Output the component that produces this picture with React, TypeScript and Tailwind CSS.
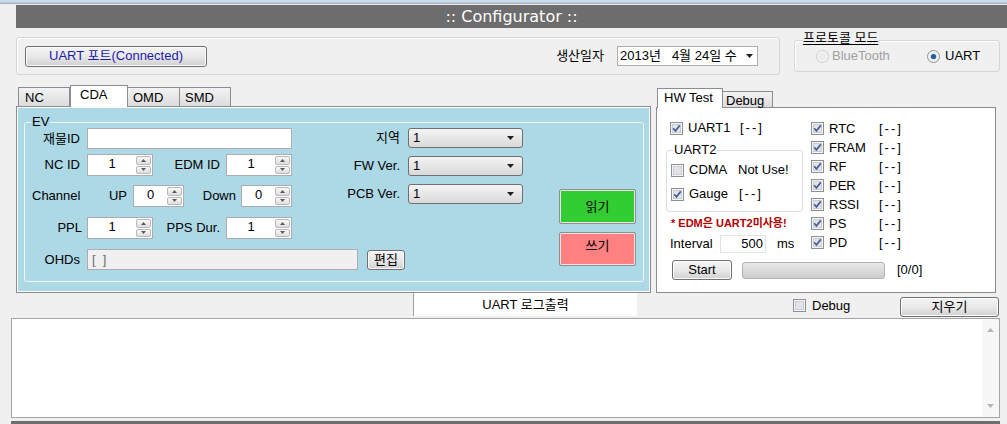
import React from "react";

const btn =
  "rounded-[3px] border border-[#707070] bg-linear-to-b from-[#f4f4f4] via-[#e9e9e9] to-[#d0d0d0] shadow-[inset_0_0_0_1px_#fcfcfc]";

function Check({ on }: { on: boolean }) {
  return (
    <svg width="13" height="13" viewBox="0 0 13 13" className="shrink-0">
      <rect x="0.5" y="0.5" width="12" height="12" fill="#f6f6f6" stroke="#8e8f8f" />
      <rect x="2.5" y="2.5" width="8" height="8" fill="#e1e4ea" stroke="#c9ccd2" />
      {on && <path d="M3.2 6.3 L5.4 8.9 L9.8 3.4" stroke="#4a5f97" strokeWidth="1.7" fill="none" />}
    </svg>
  );
}

function Radio({ on, disabled }: { on: boolean; disabled?: boolean }) {
  return (
    <svg width="13" height="13" viewBox="0 0 13 13" className="shrink-0">
      <circle cx="6.5" cy="6.5" r="6" fill={disabled ? "#f4f4f4" : "#f6f6f6"} stroke={disabled ? "#cdcdcd" : "#8e8f8f"} />
      <circle cx="6.5" cy="6.5" r="4" fill={disabled ? "#ececec" : "#e1e4ea"} />
      {on && <circle cx="6.5" cy="6.5" r="2.6" fill="#1f5f9e" />}
    </svg>
  );
}

function Caret() {
  return (
    <svg width="7" height="4" viewBox="0 0 7 4" className="shrink-0">
      <path d="M0 0 L7 0 L3.5 4 Z" fill="#222" />
    </svg>
  );
}

function Spin({ className, value }: { className: string; value: string }) {
  return (
    <div className={`flex h-[22px] border border-[#abadb3] bg-white ${className}`}>
      <div className="flex-1 text-center leading-[17px]">{value}</div>
      <div className="flex w-[16px] flex-col gap-px py-px pr-px">
        <div className="flex flex-1 items-center justify-center rounded-[2px] border border-[#b8b8b8] bg-linear-to-b from-[#f8f8f8] to-[#dedede]">
          <svg width="5" height="3" viewBox="0 0 5 3">
            <path d="M0 3 L2.5 0 L5 3 Z" fill="#5a5a5a" />
          </svg>
        </div>
        <div className="flex flex-1 items-center justify-center rounded-[2px] border border-[#b8b8b8] bg-linear-to-b from-[#f8f8f8] to-[#dedede]">
          <svg width="5" height="3" viewBox="0 0 5 3">
            <path d="M0 0 L5 0 L2.5 3 Z" fill="#5a5a5a" />
          </svg>
        </div>
      </div>
    </div>
  );
}

function Select() {
  return (
    <div className="flex h-[20px] w-[115px] items-center justify-between rounded-[3px] border border-[#707070] bg-linear-to-b from-[#f4f4f4] to-[#d9d9d9] pr-[8px] pl-[4px]">
      <span>1</span>
      <Caret />
    </div>
  );
}

function Dash() {
  return <span className="tracking-[2px]">[--]</span>;
}

function HwRow({ label, on }: { label: string; on: boolean }) {
  return (
    <div className="flex h-[19px] items-center">
      <Check on={on} />
      <span className="ml-[5px] w-[50px]">{label}</span>
      <Dash />
    </div>
  );
}

export default function App() {
  return (
    <div className="h-[424px] w-[1007px] overflow-hidden bg-[#f0f0f0] font-['Liberation_Sans','Noto_Sans_CJK_KR',sans-serif] text-[13px] text-black">
      {/* window frame edge */}
      <div className="h-[4px] border-b border-[#9fb1c6] bg-linear-to-b from-[#d3dfec] to-[#b9cbe0]" />

      {/* title bar */}
      <div className="mt-[1px] ml-[16px] flex h-[23px] items-center justify-center bg-[#6d6d6d] font-['DejaVu_Sans',sans-serif] text-[16px] text-white">
        :: Configurator ::
      </div>

      {/* port / date / protocol */}
      <div className="flex h-[57px]">
        <div className="mt-[9px] ml-[16px] flex h-[38px] w-[764px] items-center rounded-[3px] border border-[#d6d6d6] pr-[21px] pl-[8px] shadow-[inset_1px_1px_0_#fff]">
          <div className={`flex h-[21px] w-[182px] items-center justify-center text-[#1c1ca8] ${btn}`}>
            UART 포트(Connected)
          </div>
          <span className="ml-auto">생산일자</span>
          <div className="ml-[13px] flex h-[20px] w-[141px] items-center border border-[#abadb3] bg-white pr-[4px] pl-[2px]">
            <span>2013년</span>
            <span className="ml-[11px]">4월 24일 수</span>
            <span className="ml-auto">
              <Caret />
            </span>
          </div>
        </div>
        <div className="relative mt-[12px] ml-[14px] flex h-[32px] w-[206px] items-center rounded-[3px] border border-[#d6d6d6] pl-[21px] shadow-[inset_1px_1px_0_#fff]">
          <span className="absolute -top-[10px] left-[8px] bg-[#f0f0f0] leading-[14px] underline underline-offset-2">
            프로토콜 모드
          </span>
          <Radio on={false} disabled />
          <span className="ml-[3px] w-[95px] text-[#a0a0a0]">BlueTooth</span>
          <Radio on />
          <span className="ml-[5px]">UART</span>
        </div>
      </div>

      {/* tab controls */}
      <div className="flex h-[208px]">
        {/* left tab control */}
        <div className="ml-[16px] w-[635px]">
          <div className="flex h-[21px] items-end pl-[2px]">
            <div className="h-[19px] w-[52px] border border-b-0 border-[#898c95] bg-linear-to-b from-[#f3f3f3] to-[#dcdcdc] pl-[6px] leading-[19px]">
              NC
            </div>
            <div className="relative z-10 -mb-px h-[22px] w-[58px] border border-b-0 border-[#898c95] bg-white pl-[9px] leading-[18px]">
              CDA
            </div>
            <div className="h-[19px] w-[52px] border border-b-0 border-l-0 border-[#898c95] bg-linear-to-b from-[#f3f3f3] to-[#dcdcdc] pl-[5px] leading-[19px]">
              OMD
            </div>
            <div className="h-[19px] w-[51px] border border-b-0 border-l-0 border-[#898c95] bg-linear-to-b from-[#f3f3f3] to-[#dcdcdc] pl-[5px] leading-[19px]">
              SMD
            </div>
          </div>
          <div className="h-[187px] border border-[#898c95] bg-white p-[1px]">
            <div className="h-full bg-[#add8e6] pt-[14px] pr-[5px] pl-[6px]">
              <div className="relative flex h-[160px] rounded-[3px] border border-[#eef7fa] pl-px">
                <span className="absolute -top-[9px] left-[6px] bg-[#add8e6] px-px leading-[15px]">EV</span>

                <div className="flex flex-col pt-[5px]">
                  <div className="flex items-start">
                    {/* fields rows 1-4 */}
                    <div className="flex w-[266px] flex-col">
                      <div className="flex h-[21px] items-center">
                        <span className="w-[54px] text-right">재물ID</span>
                        <div className="ml-[7px] h-[21px] w-[205px] border border-[#abadb3] bg-white" />
                      </div>
                      <div className="mt-[5px] flex h-[22px] items-center">
                        <span className="w-[54px] text-right">NC ID</span>
                        <Spin className="ml-[7px] w-[66px]" value="1" />
                        <span className="w-[67px] text-right">EDM ID</span>
                        <Spin className="ml-[6px] w-[66px]" value="1" />
                      </div>
                      <div className="mt-[9px] flex h-[22px] items-center">
                        <span className="w-[61px] pl-[6px]">Channel</span>
                        <span className="w-[46px] pr-[6px] text-right">UP</span>
                        <Spin className="w-[51px]" value="0" />
                        <span className="w-[57px] pr-[5px] text-right">Down</span>
                        <Spin className="w-[51px]" value="0" />
                      </div>
                      <div className="mt-[10px] flex h-[22px] items-center">
                        <span className="w-[56px] text-right">PPL</span>
                        <Spin className="ml-[5px] w-[66px]" value="1" />
                        <span className="w-[67px] text-right">PPS Dur.</span>
                        <Spin className="ml-[6px] w-[66px]" value="1" />
                      </div>
                    </div>
                    {/* selects */}
                    <div className="flex flex-col gap-[8px]">
                      <div className="flex items-center">
                        <span className="w-[108px] text-right">지역</span>
                        <div className="ml-[8px]">
                          <Select />
                        </div>
                      </div>
                      <div className="flex items-center">
                        <span className="w-[108px] text-right">FW Ver.</span>
                        <div className="ml-[8px]">
                          <Select />
                        </div>
                      </div>
                      <div className="flex items-center">
                        <span className="w-[108px] text-right">PCB Ver.</span>
                        <div className="ml-[8px]">
                          <Select />
                        </div>
                      </div>
                    </div>
                  </div>
                  <div className="mt-[10px] flex h-[21px] items-center">
                    <span className="w-[54px] text-right">OHDs</span>
                    <div className="ml-[7px] flex h-[21px] w-[271px] items-center border border-[#abadb3] bg-[#f0f0f0] pl-[4px] text-[#6d6d6d]">
                      [&nbsp;&nbsp;]
                    </div>
                    <div className={`ml-[9px] flex h-[20px] w-[38px] items-center justify-center ${btn}`}>편집</div>
                  </div>
                </div>

                <div className="mt-[66px] ml-[36px] flex flex-col gap-[8px]">
                  <div className="flex h-[35px] w-[77px] items-center justify-center rounded-[2px] border border-[#8f8f8f] bg-[#33cc33] shadow-[inset_0_0_0_1px_#e6e6e6]">
                    읽기
                  </div>
                  <div className="flex h-[34px] w-[77px] items-center justify-center rounded-[2px] border border-[#8f8f8f] bg-[#ff8080] pb-[6px] shadow-[inset_0_0_0_1px_#e6e6e6]">
                    쓰기
                  </div>
                </div>
              </div>
            </div>
          </div>
        </div>

        {/* right tab control */}
        <div className="mt-[3px] ml-[5px] w-[340px]">
          <div className="flex h-[19px] items-end pl-px">
            <div className="relative z-10 -mb-px h-[20px] w-[66px] border border-b-0 border-[#898c95] bg-white pl-[6px] leading-[17px]">
              HW Test
            </div>
            <div className="h-[16px] w-[50px] border border-b-0 border-l-0 border-[#898c95] bg-linear-to-b from-[#f3f3f3] to-[#dcdcdc] pl-[3px] leading-[17px]">
              Debug
            </div>
          </div>
          <div className="h-[186px] border border-[#898c95] bg-white">
            <div className="flex h-[145px]">
              <div className="ml-[9px] w-[137px]">
                <div className="mt-[12px] flex h-[16px] items-center pl-[4px]">
                  <Check on />
                  <span className="ml-[5px] w-[52px]">UART1</span>
                  <Dash />
                </div>
                <div className="relative mt-[14px] h-[62px] rounded-[3px] border border-[#d5dfe5]">
                  <span className="absolute -top-[8px] left-[6px] bg-white px-px leading-[14px]">UART2</span>
                  <div className="mt-[11px] flex h-[16px] items-center pl-[4px]">
                    <Check on={false} />
                    <span className="ml-[5px] w-[49px]">CDMA</span>
                    <span>Not Use!</span>
                  </div>
                  <div className="mt-[8px] flex h-[16px] items-center pl-[4px]">
                    <Check on />
                    <span className="ml-[5px] w-[50px]">Gauge</span>
                    <Dash />
                  </div>
                </div>
                <div className="mt-[4px] h-[14px] pl-[5px] text-[11px] leading-[14px] font-bold whitespace-nowrap text-[#b20000]">
                  * EDM은 UART2미사용!
                </div>
                <div className="mt-[5px] flex h-[18px] items-center pl-[4px]">
                  <span className="w-[50px]">Interval</span>
                  <div className="h-[18px] w-[46px] border border-[#e3e3e3] pr-[2px] text-right leading-[15px]">500</div>
                  <span className="ml-[11px]">ms</span>
                </div>
              </div>
              <div className="ml-[8px] pt-[11px]">
                <HwRow label="RTC" on />
                <HwRow label="FRAM" on />
                <HwRow label="RF" on />
                <HwRow label="PER" on />
                <HwRow label="RSSI" on />
                <HwRow label="PS" on />
                <HwRow label="PD" on />
              </div>
            </div>
            <div className="mt-[7px] ml-[15px] flex items-center">
              <div className={`flex h-[20px] w-[60px] items-center justify-center ${btn}`}>Start</div>
              <div className="ml-[10px] h-[17px] w-[143px] rounded-[3px] border border-[#b2b2b2] bg-linear-to-b from-[#e8e8e8] to-[#cdcdcd]" />
              <span className="ml-[12px]">[0/0]</span>
            </div>
          </div>
        </div>
      </div>

      {/* log header row */}
      <div className="flex h-[25px]">
        <div className="ml-[413px] flex h-[23px] w-[224px] items-center justify-center border-l border-[#a0a0a0] bg-white">
          UART 로그출력
        </div>
        <div className="ml-[156px] flex w-[107px] items-center">
          <Check on={false} />
          <span className="ml-[6px]">Debug</span>
        </div>
        <div className={`mt-[4px] flex h-[20px] w-[99px] items-center justify-center ${btn}`}>지우기</div>
      </div>

      {/* log area */}
      <div className="ml-[11px] flex h-[100px] w-[989px] justify-end border border-[#a5a5a5] bg-white">
        <div className="flex w-[17px] flex-col items-center justify-between bg-[#f7f7f7] py-[9px]">
          <svg width="7" height="4" viewBox="0 0 7 4">
            <path d="M0 4 L3.5 0 L7 4 Z" fill="#b5b5b5" />
          </svg>
          <svg width="7" height="4" viewBox="0 0 7 4">
            <path d="M0 0 L7 0 L3.5 4 Z" fill="#b5b5b5" />
          </svg>
        </div>
      </div>
      <div className="mt-[3px] ml-[11px] h-[3px] w-[989px] bg-[#6d6d6d]" />
    </div>
  );
}
